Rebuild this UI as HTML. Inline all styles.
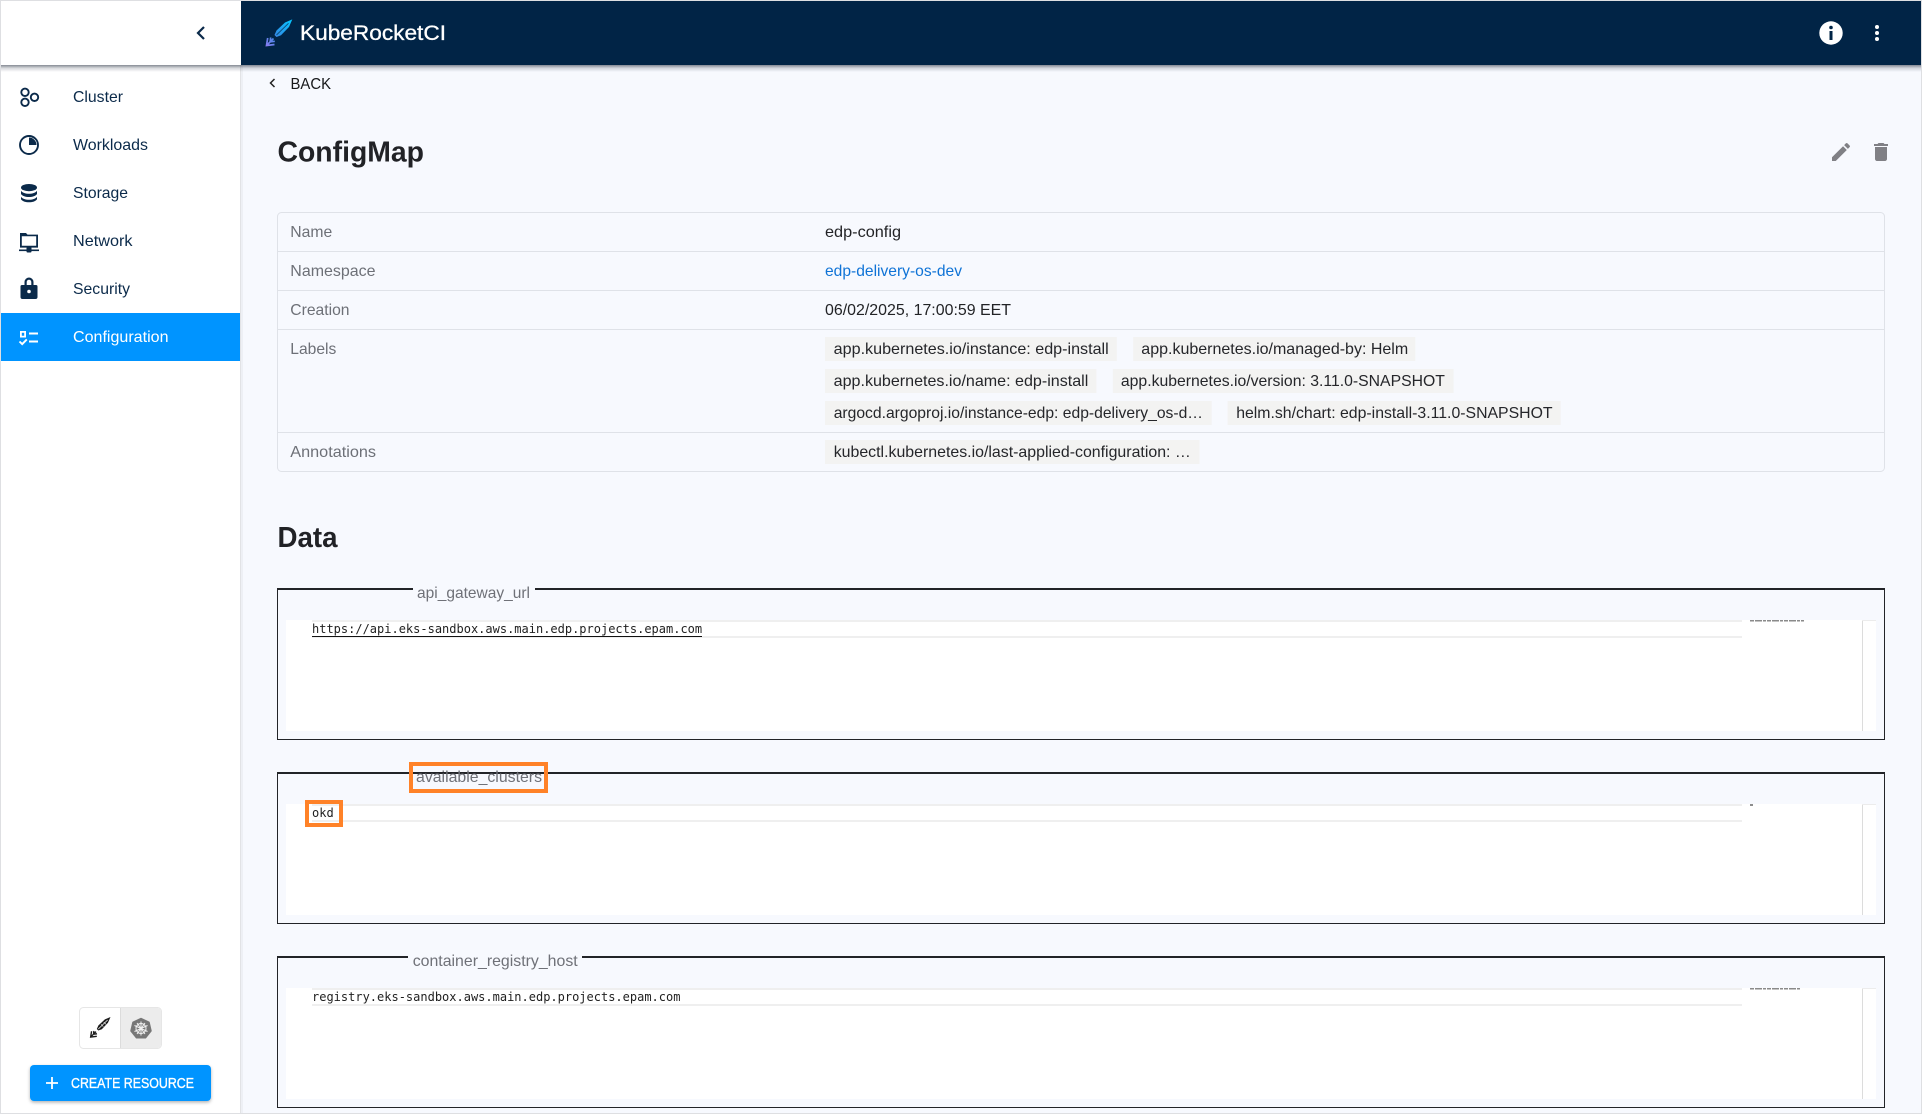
<!DOCTYPE html>
<html lang="en"><head><meta charset="utf-8"><title>ConfigMap - KubeRocketCI</title>
<style>
html,body{margin:0;padding:0;background:#f7f9fe;width:1922px;height:1114px;overflow:hidden}
svg{display:block}
text{font-family:"Liberation Sans",Arial,sans-serif;font-size:16px}
.nav{fill:#0b2a4a}
.lb{fill:#6d7077}
.val{fill:#222326}
.chip{fill:#f3f3f2}
.ct{fill:#25262a}
.mono{font-family:"DejaVu Sans Mono","Liberation Mono",monospace;font-size:12px;fill:#1f1f1f}
.leg{fill:#6f7178;font-size:16px}
.h{font-weight:700;font-size:29px;fill:#212226}
.mm{stroke:#8a8a8a;stroke-width:1.5;stroke-dasharray:4 1 7 1 3 1;fill:none}
</style></head><body>
<svg width="1922" height="1114" viewBox="0 0 1922 1114" xmlns="http://www.w3.org/2000/svg">
<defs>
<linearGradient id="sh" x1="0" y1="0" x2="0" y2="1"><stop offset="0" stop-color="#3a4252" stop-opacity=".62"/><stop offset=".45" stop-color="#3a4252" stop-opacity=".2"/><stop offset="1" stop-color="#3a4252" stop-opacity="0"/></linearGradient>
<linearGradient id="lg" x1="33" y1="6" x2="8" y2="32" gradientUnits="userSpaceOnUse"><stop offset="0" stop-color="#06c6ff"/><stop offset=".55" stop-color="#2e8fe8"/><stop offset="1" stop-color="#8b7cf0"/></linearGradient>
<filter id="bs" x="-10%" y="-20%" width="120%" height="150%"><feDropShadow dx="0" dy="1.5" stdDeviation="1.5" flood-color="#000" flood-opacity=".3"/></filter>
</defs>
<rect width="1922" height="1114" fill="#dedfe2"/>
<rect x="1" y="1" width="1920" height="1112" fill="#f7f9fe"/>

<!-- sidebar -->
<rect x="1" y="1" width="239" height="1112" fill="#fff"/>
<rect x="240" y="1" width="1" height="1112" fill="#e2e3e6"/>
<rect x="241" y="65" width="2" height="1048" fill="#eef0f5"/>
<rect x="1" y="313" width="239" height="48" fill="#0094ff"/>

<!-- header -->
<rect x="1" y="1" width="240" height="64" fill="#fff"/>
<rect x="241" y="1" width="1680" height="64" fill="#012446"/>
<rect x="1" y="65" width="1920" height="7" fill="url(#sh)"/>
<path d="M204 27l-6 6 6 6" fill="none" stroke="#0b2a4a" stroke-width="2.2"/>

<!-- logo -->
<g transform="translate(258 14)">
<path d="M34.300 5.400L27 8.500 18.500 16.500 16.500 21 18.500 23 23 21.300 31 13Z" fill="url(#lg)"/>
<path d="M30.500 9.300L18.500 21" stroke="#0b4a7a" stroke-width=".9" fill="none"/>
<path d="M8.500 31.500L15.500 24.500M9.700 24L8.500 31.500 16.500 30.500M12.700 23.500L12.200 27.800 16.800 27.300" fill="none" stroke="url(#lg)" stroke-width="1.700"/>
</g>
<text x="300" y="40" textLength="146" lengthAdjust="spacingAndGlyphs" fill="#fff" stroke="#fff" stroke-width=".3" style="font-size:21px">KubeRocketCI</text>
<circle cx="1831" cy="33" r="11.7" fill="#fff"/>
<rect x="1829.500" y="31" width="3" height="9" fill="#012446"/><circle cx="1831" cy="27.500" r="1.800" fill="#012446"/>
<circle cx="1877" cy="27" r="2" fill="#fff"/><circle cx="1877" cy="33" r="2" fill="#fff"/><circle cx="1877" cy="39" r="2" fill="#fff"/>

<!-- nav icons -->
<g fill="none" stroke="#0b2a4a" stroke-width="1.900">
<circle cx="25" cy="92.300" r="3.700"/><circle cx="34.500" cy="97.300" r="3.700"/><circle cx="25" cy="102.300" r="3.700"/>
<circle cx="29" cy="145" r="9"/>
</g>
<path d="M29 145V137.500A7.500 7.500 0 0 1 36.500 145Z" fill="#0b2a4a"/>
<g fill="#0b2a4a">
<ellipse cx="29" cy="187.600" rx="8" ry="3.600"/>
<path d="M21 190.800c1.500 2 4.500 3 8 3s6.500-1 8-3v3.200c-1.500 2-4.500 3-8 3s-6.500-1-8-3z"/>
<path d="M21 196.800c1.500 2 4.500 3 8 3s6.500-1 8-3v2.500c-1.500 2.200-4.500 3-8 3s-6.500-.8-8-3z"/>
<path d="M20 233h6l1.500 1.600H38v13H20zm1.800 3.200v9.600h14.400v-9.600z"/>
<rect x="19" y="249.500" width="20" height="1.600"/><rect x="26.500" y="247" width="5" height="5.500" rx="1"/>
<path d="M24.500 285v-3a4.500 4.500 0 0 1 9 0v3h2.500a1.500 1.500 0 0 1 1.500 1.500v10.500a2 2 0 0 1-2 2h-13a2 2 0 0 1-2-2v-10.500a1.500 1.500 0 0 1 1.500-1.500zm2.200 0h4.600v-3a2.300 2.300 0 0 0-4.600 0z"/>
</g>
<circle cx="29" cy="291.500" r="1.800" fill="#fff"/>
<g fill="#fff">
<path d="M20 331h6v6.500h-6zm1.800 1.800v2.900h2.400v-2.900z"/>
<rect x="29" y="332.500" width="9" height="2"/><rect x="29" y="340.500" width="9" height="2"/>
</g>
<path d="M19.500 341.500l2.700 2.600 4.600-4.700" fill="none" stroke="#fff" stroke-width="1.900"/>

<text class="nav" x="73" y="102" textLength="50" lengthAdjust="spacingAndGlyphs">Cluster</text>
<text class="nav" x="73" y="150" textLength="75" lengthAdjust="spacingAndGlyphs">Workloads</text>
<text class="nav" x="73" y="198" textLength="55" lengthAdjust="spacingAndGlyphs">Storage</text>
<text class="nav" x="73" y="246" textLength="59.500" lengthAdjust="spacingAndGlyphs">Network</text>
<text class="nav" x="73" y="294" textLength="57" lengthAdjust="spacingAndGlyphs">Security</text>
<text x="73" y="342" textLength="95.500" lengthAdjust="spacingAndGlyphs" fill="#fff">Configuration</text>

<!-- sidebar bottom -->
<rect x="79.500" y="1007.500" width="82" height="41" rx="4" fill="#fff" stroke="#e6e6e6"/>
<path d="M120 1008h37.500a3.500 3.500 0 0 1 3.500 3.500v33a3.500 3.500 0 0 1-3.500 3.500H120z" fill="#ececec"/>
<rect x="120" y="1008" width="1" height="40" fill="#dcdcdc"/>
<g transform="translate(84.100 1012.800) scale(.77)">
<path d="M34.300 5.400L27 8.500 18.500 16.500 16.500 21 18.500 23 23 21.300 31 13Z" fill="#1d1d1d"/>
<path d="M30.500 9.300L18.500 21" stroke="#fff" stroke-width=".9" fill="none"/>
<path d="M22 15l3 3M25.500 12l3 3" stroke="#fff" stroke-width=".7" fill="none"/>
<path d="M8.500 31.500L15.500 24.500M9.700 24L8.500 31.500 16.500 30.500M12.700 23.500L12.200 27.800 16.800 27.300" fill="none" stroke="#1d1d1d" stroke-width="1.800"/>
</g>
<path d="M141 1018.500l8 3.800 2 8.600-5.500 6.900h-9l-5.500-6.900 2-8.600z" fill="#777" stroke="#777" stroke-width="1.500" stroke-linejoin="round"/>
<g fill="none" stroke="#f1f1f1" stroke-width="1">
<circle cx="141" cy="1028.500" r="5"/>
<path d="M141 1021.500v14M134.500 1025.500l13 6M147.500 1025.500l-13 6M137 1023l8 11M145 1023l-8 11"/>
</g>
<rect x="30" y="1065" width="181" height="36" rx="4" fill="#0094ff" filter="url(#bs)"/>
<path d="M46 1083h12M52 1077v12" stroke="#fff" stroke-width="1.800"/>
<text x="71" y="1088" textLength="123" lengthAdjust="spacingAndGlyphs" fill="#fff" stroke="#fff" stroke-width=".35" style="font-size:14.500px">CREATE RESOURCE</text>

<!-- back -->
<path d="M274.500 79l-4 4 4 4" fill="none" stroke="#222" stroke-width="1.500"/>
<text x="290.500" y="89" textLength="40.500" lengthAdjust="spacingAndGlyphs" fill="#17181a">BACK</text>

<text class="h" x="277.500" y="161.500" textLength="146.500" lengthAdjust="spacingAndGlyphs">ConfigMap</text>
<path d="M1832 157.250V161h3.750l11.060-11.060-3.750-3.750L1832 157.250zm17.710-10.210a1 1 0 0 0 0-1.410l-2.340-2.340a1 1 0 0 0-1.410 0l-1.830 1.830 3.750 3.750 1.830-1.830z" fill="#808085"/>
<path d="M1875 159c0 1.100.9 2 2 2h8c1.100 0 2-.9 2-2V147h-12v12zM1888 144h-3.500l-1-1h-5l-1 1H1874v2h14v-2z" fill="#808085"/>

<!-- table -->
<rect x="277.500" y="212.500" width="1607" height="259" rx="4" fill="none" stroke="#dfe2e8"/>
<g fill="#dfe2e8">
<rect x="278" y="251" width="1606" height="1"/><rect x="278" y="290" width="1606" height="1"/><rect x="278" y="329" width="1606" height="1"/><rect x="278" y="432" width="1606" height="1"/>
</g>
<text class="lb" x="290.300" y="237" textLength="42" lengthAdjust="spacingAndGlyphs">Name</text>
<text class="lb" x="290.300" y="276" textLength="85.200" lengthAdjust="spacingAndGlyphs">Namespace</text>
<text class="lb" x="290.300" y="315" textLength="59.200" lengthAdjust="spacingAndGlyphs">Creation</text>
<text class="lb" x="290.300" y="354" textLength="46" lengthAdjust="spacingAndGlyphs">Labels</text>
<text class="lb" x="290.300" y="457" textLength="85.700" lengthAdjust="spacingAndGlyphs">Annotations</text>
<text class="val" x="825" y="237" textLength="76" lengthAdjust="spacingAndGlyphs">edp-config</text>
<text x="825" y="276" textLength="137" lengthAdjust="spacingAndGlyphs" fill="#0f73d6">edp-delivery-os-dev</text>
<text class="val" x="825" y="315" textLength="186" lengthAdjust="spacingAndGlyphs">06/02/2025, 17:00:59 EET</text>

<rect class="chip" x="825" y="337" width="291.800" height="24"/><text class="ct" x="833.700" y="354" textLength="275" lengthAdjust="spacingAndGlyphs">app.kubernetes.io/instance: edp-install</text>
<rect class="chip" x="1133.200" y="337" width="282.100" height="24"/><text class="ct" x="1141.300" y="354" textLength="266.900" lengthAdjust="spacingAndGlyphs">app.kubernetes.io/managed-by: Helm</text>
<rect class="chip" x="825" y="369" width="271.400" height="24"/><text class="ct" x="833.700" y="386" textLength="254.600" lengthAdjust="spacingAndGlyphs">app.kubernetes.io/name: edp-install</text>
<rect class="chip" x="1112.800" y="369" width="340.800" height="24"/><text class="ct" x="1120.900" y="386" textLength="324" lengthAdjust="spacingAndGlyphs">app.kubernetes.io/version: 3.11.0-SNAPSHOT</text>
<rect class="chip" x="825" y="401" width="386.700" height="24"/><text class="ct" x="833.700" y="418" textLength="369.300" lengthAdjust="spacingAndGlyphs">argocd.argoproj.io/instance-edp: edp-delivery_os-d…</text>
<rect class="chip" x="1227.600" y="401" width="333.100" height="24"/><text class="ct" x="1236.200" y="418" textLength="316.400" lengthAdjust="spacingAndGlyphs">helm.sh/chart: edp-install-3.11.0-SNAPSHOT</text>
<rect class="chip" x="825" y="440" width="374.500" height="24"/><text class="ct" x="833.700" y="457" textLength="357.100" lengthAdjust="spacingAndGlyphs">kubectl.kubernetes.io/last-applied-configuration: …</text>

<text class="h" x="277.500" y="547" textLength="60" lengthAdjust="spacingAndGlyphs">Data</text>

<!-- block 1 -->
<g>
<path d="M277.500 589H1884.500V739.500H277.500Z" fill="none" stroke="#222428" stroke-width="1"/>
<rect x="277" y="588" width="1608" height="2" fill="#222428"/>
<rect x="413" y="586" width="122" height="5" fill="#f7f9fe"/>
<text class="leg" x="417" y="598" textLength="113" lengthAdjust="spacingAndGlyphs">api_gateway_url</text>
<rect x="286" y="620" width="1590" height="111" fill="#fff"/>
<rect x="312" y="620" width="1430" height="2" fill="#efefef"/><rect x="312" y="636" width="1430" height="2" fill="#efefef"/>
<text class="mono" x="312" y="633">https://api.eks-sandbox.aws.main.edp.projects.epam.com</text>
<rect x="312" y="636" width="390" height="1" fill="#111"/>
<path class="mm" d="M1750 620.750H1804"/>
<rect x="1862" y="620" width="1" height="111" fill="#dcdcdc"/><rect x="1862" y="620" width="14" height="1" fill="#ececec"/>
</g>

<!-- block 2 -->
<g>
<path d="M277.500 773H1884.500V923.500H277.500Z" fill="none" stroke="#222428" stroke-width="1"/>
<rect x="277" y="772" width="1608" height="2" fill="#222428"/>
<rect x="411" y="774" width="135" height="17" fill="#f7f9fe"/>
<text class="leg" x="416" y="782" textLength="126" lengthAdjust="spacingAndGlyphs">available_clusters</text>
<rect x="286" y="804" width="1590" height="111" fill="#fff"/>
<rect x="312" y="804" width="1430" height="2" fill="#efefef"/><rect x="312" y="820" width="1430" height="2" fill="#efefef"/>
<text class="mono" x="312" y="817">okd</text>
<rect x="1750" y="804" width="3" height="2" fill="#8d8d8d"/>
<rect x="1862" y="804" width="1" height="111" fill="#dcdcdc"/><rect x="1862" y="804" width="14" height="1" fill="#ececec"/>
<rect x="411" y="764" width="135" height="27" fill="none" stroke="#ff8228" stroke-width="4"/>
<rect x="307" y="802" width="34" height="23" fill="none" stroke="#ff8228" stroke-width="4"/>
</g>

<!-- block 3 -->
<g>
<path d="M277.500 957H1884.500V1107.500H277.500Z" fill="none" stroke="#222428" stroke-width="1"/>
<rect x="277" y="956" width="1608" height="2" fill="#222428"/>
<rect x="408" y="954" width="174" height="5" fill="#f7f9fe"/>
<text class="leg" x="412.700" y="966" textLength="165" lengthAdjust="spacingAndGlyphs">container_registry_host</text>
<rect x="286" y="988" width="1590" height="111" fill="#fff"/>
<rect x="312" y="988" width="1430" height="2" fill="#efefef"/><rect x="312" y="1004" width="1430" height="2" fill="#efefef"/>
<text class="mono" x="312" y="1001">registry.eks-sandbox.aws.main.edp.projects.epam.com</text>
<path class="mm" d="M1750 988.750H1801"/>
<rect x="1862" y="988" width="1" height="111" fill="#dcdcdc"/><rect x="1862" y="988" width="14" height="1" fill="#ececec"/>
</g>
</svg>
</body></html>
